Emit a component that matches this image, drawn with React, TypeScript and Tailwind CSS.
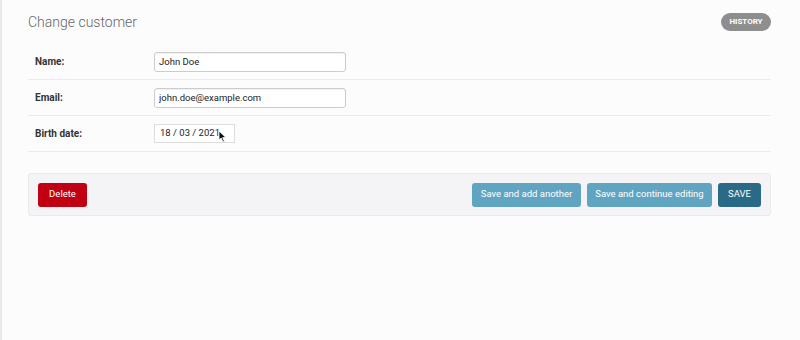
import React from "react";

const font = { fontFamily: "Roboto, 'Liberation Sans', sans-serif" };

const Row = ({ label, children }: { label: string; children: React.ReactNode }) => (
  <div className="flex h-[36px] items-center border-b border-[#ececec]">
    <label className="w-[126px] pl-[7px] text-[10px] font-bold text-[#333]">{label}</label>
    {children}
  </div>
);

export default function App() {
  return (
    <div className="h-[340px] w-[800px] border-l-2 border-[#e8e8e8] bg-[#fdfcfd]" style={font}>
      <div className="pl-[26px] pr-[29px]">
        <div className="flex h-[44px] items-center justify-between pt-[1px]">
          <h1 className="text-[14px] font-light text-[#666]">Change customer</h1>
          <a className="mt-[-2px] flex h-[18px] w-[50px] items-center justify-center rounded-full bg-[#8e8e8e] text-[8px] font-bold text-white">
            HISTORY
          </a>
        </div>
        <Row label="Name:">
          <input
            defaultValue="John Doe"
            className="h-[20px] w-[192px] rounded-[3px] border border-[#ccc] bg-white px-[4px] text-[9.5px] text-[#222] shadow-[inset_0_1px_1px_rgba(0,0,0,0.06)] outline-none"
          />
        </Row>
        <Row label="Email:">
          <input
            defaultValue="john.doe@example.com"
            className="h-[20px] w-[192px] rounded-[3px] border border-[#ccc] bg-white px-[4px] text-[9.5px] text-[#222] shadow-[inset_0_1px_1px_rgba(0,0,0,0.06)] outline-none"
          />
        </Row>
        <Row label="Birth date:">
          <div className="relative flex h-[19px] w-[81px] items-center whitespace-nowrap border border-[#ddd] bg-white px-[5px] text-[9.5px] text-[#222]">
            18 / 03 / 2021
            <svg className="absolute left-[63px] top-[5px]" width="9" height="13" viewBox="0 0 9 13">
              <path d="M1 1 L1 10 L3.2 8 L5 12 L6.4 11.4 L4.7 7.6 L7.8 7.4 Z" fill="#111" stroke="#fff" strokeWidth="0.8" />
            </svg>
          </div>
        </Row>
        <div className="mt-[21px] flex h-[43px] items-center justify-between rounded-[3px] border border-[#eaeaea] bg-[#f4f4f6] px-[9px]">
          <button className="h-[24px] w-[49px] rounded-[3px] bg-[#c10014] text-[9.5px] text-white">Delete</button>
          <div className="flex gap-[6px]">
            <button className="h-[24px] w-[109px] rounded-[3px] bg-[#5fa5c2] text-[9.5px] text-white">Save and add another</button>
            <button className="h-[24px] w-[125px] rounded-[3px] bg-[#5fa5c2] text-[9.5px] text-white">Save and continue editing</button>
            <button className="h-[24px] w-[43px] rounded-[3px] bg-[#2a6a86] text-[9.5px] text-white">SAVE</button>
          </div>
        </div>
      </div>
    </div>
  );
}
